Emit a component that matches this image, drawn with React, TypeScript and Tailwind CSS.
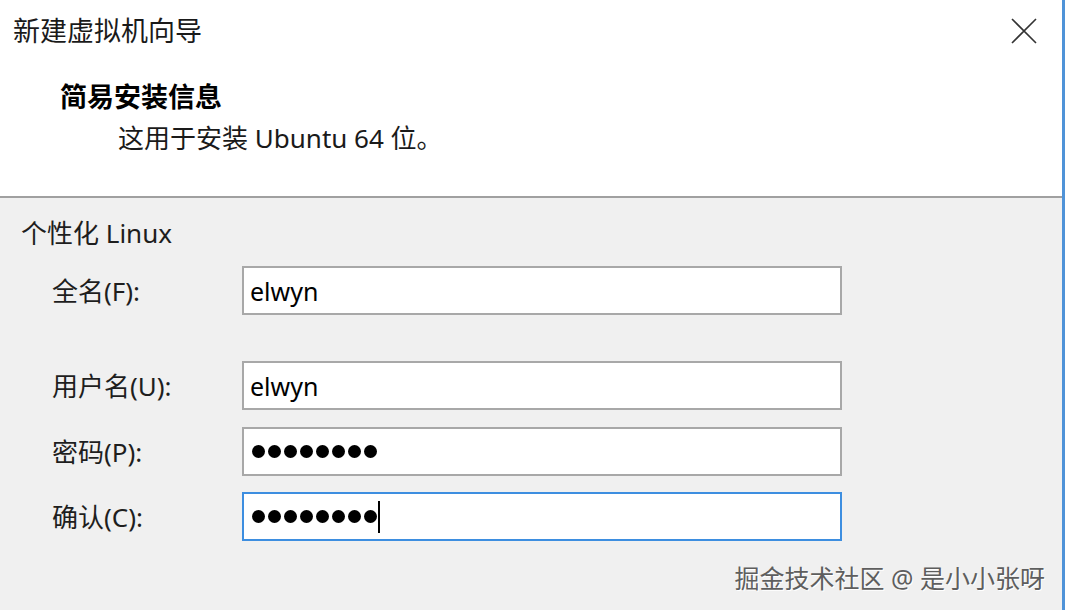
import React from "react";

const font = {
  fontFamily:
    '"Segoe UI", "Noto Sans", "Noto Sans CJK SC", sans-serif',
};

function CloseIcon() {
  return (
    <svg width="26" height="26" viewBox="0 0 26 26" className="block">
      <path d="M1 1 L25 25 M25 1 L1 25" stroke="#333" strokeWidth="1.6" fill="none" />
    </svg>
  );
}

function Dots() {
  return (
    <div className="flex items-center gap-[3px]">
      {Array.from({ length: 8 }).map((_, i) => (
        <span key={i} className="block w-[13px] h-[13px] rounded-full bg-black" />
      ))}
    </div>
  );
}

function Field({
  label,
  value,
  password,
  focused,
  className,
}: {
  label: string;
  value?: string;
  password?: boolean;
  focused?: boolean;
  className?: string;
}) {
  return (
    <div className={`flex items-center ${className ?? ""}`}>
      <div className="w-[242px] pl-[52px] text-[26px] leading-[36px] text-[#1e1e1e]">{label}</div>
      <div
        className={`w-[600px] h-[49px] flex items-center pl-[6px] bg-white border-2 ${
          focused ? "border-[#3d8ee0]" : "border-[#a8a8a8]"
        }`}
      >
        {password ? (
          <div className="flex items-center pl-[2px]">
            <Dots />
            {focused && <span className="block ml-[1px] w-[2px] h-[32px] bg-black" />}
          </div>
        ) : (
          <span className="text-[25px] leading-[36px] text-black">{value}</span>
        )}
      </div>
    </div>
  );
}

export default function App() {
  return (
    <div
      className="relative w-[1065px] h-[610px] flex bg-[#f0f0f0] overflow-hidden"
      style={font}
    >
      <div className="flex-1 flex flex-col">
        {/* Header */}
        <div className="h-[198px] bg-white border-b-2 border-[#a0a0a0] flex flex-col">
          <div className="flex items-start justify-between pt-[13px] pl-[13px] pr-[25px]">
            <span className="text-[27px] leading-[36px] text-[#1a1a1a]">新建虚拟机向导</span>
            <span className="mt-[5px]">
              <CloseIcon />
            </span>
          </div>
          <div className="mt-[30px] pl-[60px] text-[27px] leading-[36px] font-bold text-black">
            简易安装信息
          </div>
          <div className="mt-[5px] pl-[118px] text-[26px] leading-[36px] text-[#1a1a1a]">
            这用于安装 Ubuntu 64 位。
          </div>
        </div>

        {/* Body */}
        <div className="flex flex-col pt-[17px]">
          <div className="pl-[21px] text-[26px] leading-[36px] text-[#1e1e1e]">个性化 Linux</div>
          <Field className="mt-[15px]" label="全名(F):" value="elwyn" />
          <Field className="mt-[46px]" label="用户名(U):" value="elwyn" />
          <Field className="mt-[17px]" label="密码(P):" password />
          <Field className="mt-[16px]" label="确认(C):" password focused />
        </div>
      </div>
      <div className="w-[3px] bg-[#4f93d8]" />

      {/* Watermark */}
      <div
        className="absolute right-[20px] bottom-[16px] text-[25px] leading-[32px] text-[#5e5e5e]"
        style={{ textShadow: "1px 1px 0 #ffffff" }}
      >
        掘金技术社区 @ 是小小张呀
      </div>
    </div>
  );
}
